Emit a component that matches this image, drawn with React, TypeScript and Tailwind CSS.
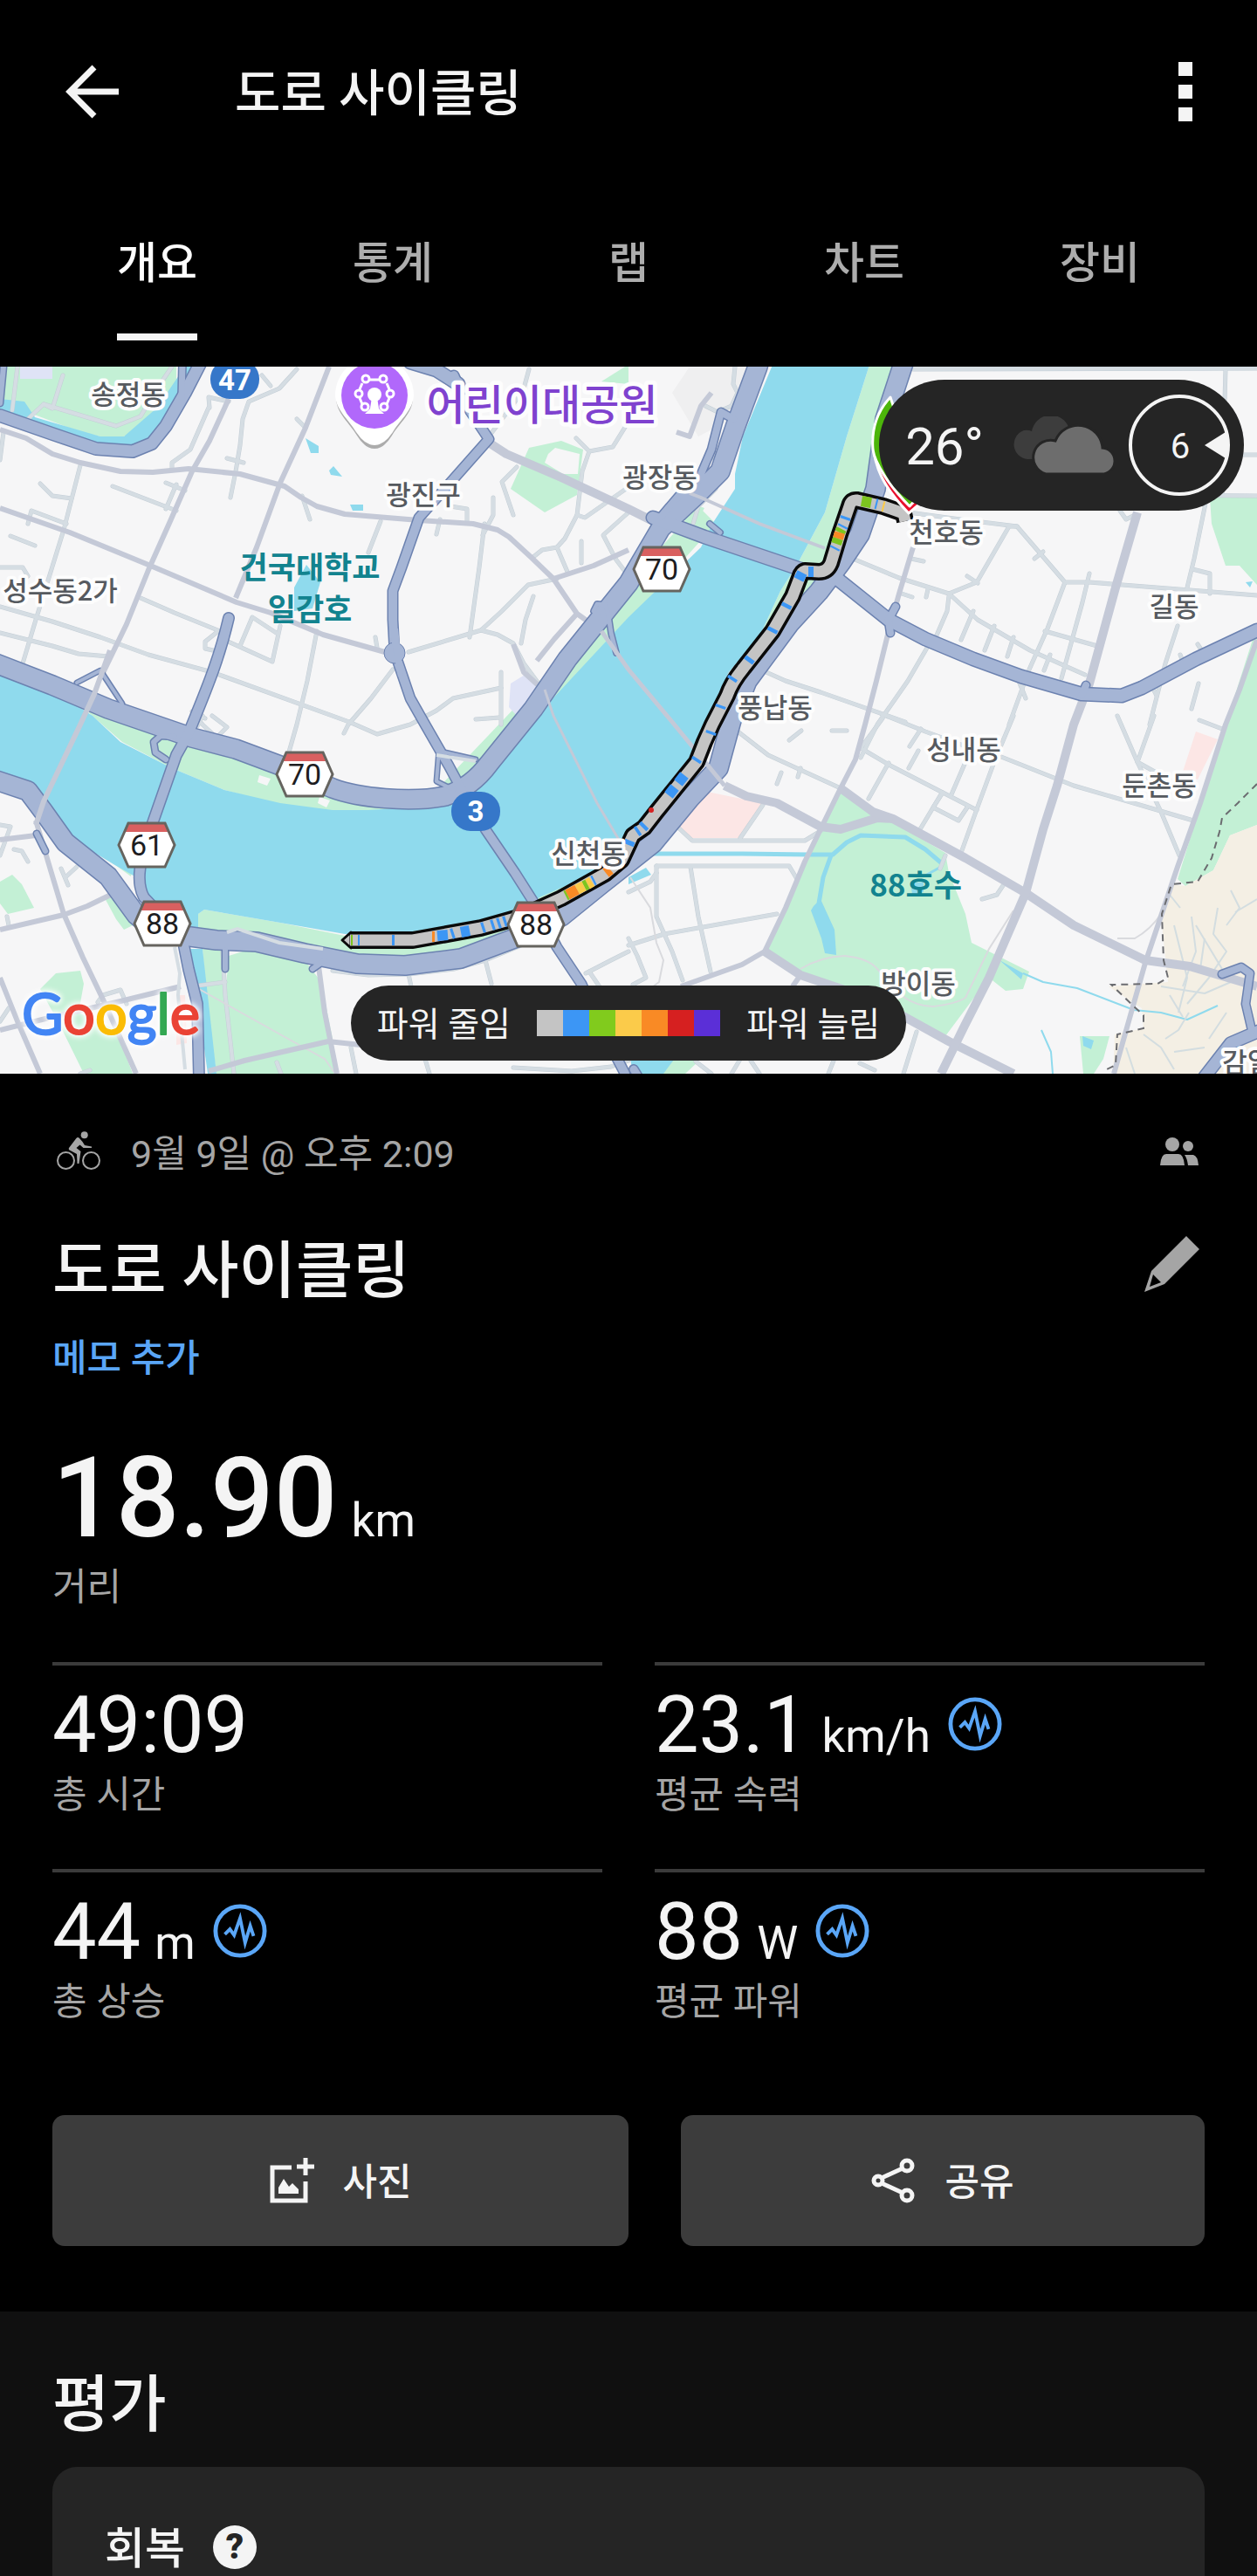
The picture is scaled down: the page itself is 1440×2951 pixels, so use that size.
import React from "react";

const minorRoads = [
  "92,533 73,607 41,710 23,770",
  "0,695 60,712 115,730 170,750 243,770 400,827 432,841 470,830 500,814 519,800 574,788",
  "0,725 60,740 90,749 124,752",
  "161,685 200,702 252,723",
  "129,557 202,585",
  "190,553 212,562",
  "202,555 190,583",
  "46,554 60,568 82,571",
  "12,614 40,625",
  "32,600 36,585 76,600",
  "0,650 26,650 32,660",
  "239,467 218,515 197,530 197,537",
  "262,460 239,455 240,467",
  "340,423 320,445 285,460 278,480 275,510 270,540 264,570",
  "260,525 279,530",
  "300,430 310,442",
  "340,480 350,490",
  "346,568 355,595",
  "363,723 352,780 340,830 330,865",
  "555,600 549,650 538,730",
  "468,747 551,722 570,727 588,737 600,760 620,787",
  "551,722 575,700 605,670 638,663",
  "597,737 602,710 611,683",
  "450,767 425,800 399,830 394,840",
  "574,770 574,830",
  "545,824 572,822",
  "257,733 312,758 321,717",
  "275,740 289,707 318,726",
  "250,723 235,735 235,743 244,745",
  "436,597 422,633",
  "430,730 432,742",
  "565,570 565,590 553,613",
  "500,612 504,595",
  "516,580 535,583 535,597",
  "720,483 702,512 675,517 667,540 661,590 647,617 638,627 621,630 611,638",
  "638,627 650,655",
  "666,620 666,645",
  "661,590 670,593 720,558",
  "720,587 691,613 705,640 720,660",
  "588,590 575,552 592,535",
  "660,502 675,517",
  "606,423 600,445 588,463 560,500",
  "32,480 50,463 133,488 161,477 180,445 197,420",
  "50,463 60,468 72,430",
  "14,470 20,420",
  "0,527 4,495",
  "977,640 1030,662 1087,680 1120,710 1180,745 1243,773",
  "1087,680 1119,667 1156,603 1165,603 1220,667 1248,667 1440,682",
  "1041,587 1100,595 1165,603",
  "1220,667 1200,720 1179,767 1156,830",
  "1248,657 1240,690 1216,777",
  "1349,717 1335,760 1317,830",
  "1383,567 1368,640 1360,673",
  "1366,652 1386,657 1386,680",
  "1283,585 1290,595 1300,590",
  "1195,632 1185,640",
  "1108,660 1120,668",
  "1044,640 1058,643",
  "1033,680 1045,684",
  "1063,675 1061,684",
  "871,767 900,780 940,793 1037,827",
  "1069,730 1040,780 1005,830 986,868",
  "1087,683 1085,700 1072,730",
  "1115,700 1101,733",
  "1139,717 1128,745",
  "1161,730 1154,752",
  "1197,723 1257,740",
  "1203,750 1196,768",
  "1165,775 1175,800",
  "1320,787 1325,797",
  "1352,750 1358,765",
  "1372,738 1380,750",
  "1373,783 1365,812",
  "1374,825 1400,835",
  "1046,423 1440,422",
  "1303,567 1440,568",
  "1400,521 1440,521",
  "1404,423 1400,567",
  "844,837 880,865 963,903",
  "986,857 1020,877 1119,928",
  "1011,823 986,857",
  "1010,818 1060,838 1120,860 1147,867 1230,900 1367,940",
  "1055,835 1042,855",
  "904,848 918,837",
  "953,837 970,837",
  "1161,820 1140,870 1119,927 1101,977",
  "1080,908 1069,925 1098,940 1108,925",
  "1106,873 1090,910",
  "1052,860 1041,880",
  "1018,874 995,915",
  "1078,910 1054,950",
  "1280,820 1303,873 1330,930 1351,980",
  "1322,820 1303,873 1330,888",
  "752,992 904,992 913,1007",
  "791,993 800,1050 814,1113",
  "720,1083 761,1070 890,1047",
  "752,992 752,1050 770,1090 782,1123",
  "720,1022 745,1010 752,1000",
  "720,1075 730,1095 740,1120 725,1128",
  "777,948 793,963 922,963 940,952",
  "874,922 848,960",
  "895,885 890,898",
  "917,880 914,890",
  "1125,1030 1142,1025 1152,1010",
  "1083,980 1077,995",
  "381,1112 422,1117 468,1116 520,1110 556,1100 597,1083",
  "556,1100 563,1127",
  "468,1116 471,1130",
  "675,1113 690,1135",
  "671,1115 700,1100 720,1090",
  "255,1090 258,1140 268,1230",
  "220,1130 258,1125",
  "317,1217 322,1230",
  "402,1200 408,1230",
  "486,1210 492,1230",
  "588,1223 655,1227 700,1222 720,1215",
  "0,980 12,947 0,945",
  "16,973 25,975 32,987",
  "70,995 78,1014",
  "88,993 76,1004",
  "8,1050 10,1060",
  "112,1148 118,1140 138,1134 145,1150",
  "92,1230 103,1226",
  "0,1170 10,1155",
  "223,820 232,830 245,842",
  "232,820 226,832",
  "243,820 260,833 250,843",
  "235,823 220,815",
  "838,1230 850,1210",
  "860,1215 870,1230",
  "949,1230 955,1215",
  "985,1218 1002,1226",
  "1050,1182 1035,1230",
  "797,1216 815,1230",
  "842,420 840,440 845,450 838,465 822,472 808,465",
  "818,520 822,540",
  "818,525 826,535 820,560 800,580 794,600",
];

const greyRoads = [
  "0,492 30,502 60,520 92,530 138,540 175,541 216,537 275,543 326,557 345,570 363,580 395,589 480,596 542,600 570,607 583,615 608,638 634,663 661,703 689,723",
  "0,582 80,610 170,647 271,690 310,702 370,727 441,747",
  "262,457 240,505 220,540 195,597 170,653 145,715 115,777",
  "377,420 350,490 321,553 294,627 270,685",
  "720,630 680,648 634,663",
  "661,703 635,732 615,757",
  "588,738 600,770 622,790",
  "0,962 41,957",
  "41,940 73,1047 95,1097 119,1147 156,1230",
  "0,1065 73,1048 100,1038 133,1022",
  "0,1180 60,1165 138,1147 207,1130",
  "0,1120 20,1170 46,1230",
  "365,1107 372,1160 386,1230",
  "239,1227 280,1215 376,1193 413,1197",
  "1046,627 1030,680 1018,723 1004,780 991,830 980,870 963,903 940,950 922,987 900,1040 876,1090",
  "876,1090 850,1105 780,1130",
  "917,1117 908,1130",
  "1440,733 1420,790 1404,830 1375,920 1349,993 1312,1103 1276,1230",
  "720,583 748,594",
  "775,495 790,500 803,465 815,450",
];

const widePaths = [
  "560,507 580,520 643,547 720,583 748,597",
  "830,900 855,912 890,920 940,947 963,950 1005,937 1023,938 1106,983 1175,1023 1230,1060 1312,1100 1363,1107 1440,1130",
  "963,903 1000,930 1023,938",
  "876,1090 917,1117 1000,1145 1087,1193 1161,1230",
  "1303,587 1278,673 1248,783 1230,830 1211,900 1195,950 1175,1023 1133,1120 1105,1175 1078,1230",
];

const blueRoads = [
  { d: "M262 708C250 760 232 800 216 840L202 865L174 945C160 985 155 1010 165 1028L186 1050", w: 11 },
  { d: "M520 430L538 470L560 503L514 555L480 593L460 650L450 677V710L452 747L470 800L487 830L514 877L528 903L556 950L590 1000L611 1033L638 1085L666 1127L690 1180L716 1230", w: 10 },
  { d: "M470 415L500 424L525 440", w: 14 },
  { d: "M748 593L807 615L917 652L959 663L1018 710L1060 732L1115 755L1170 775L1239 795L1285 797L1308 788L1370 755L1440 722", w: 14 },
  { d: "M840 480L826 472L815 515L800 550L780 565L757 592", w: 8 },
  { d: "M0 476L60 497L110 514L152 517L174 508L190 488L212 450L230 415", w: 13 },
  { d: "M209 415L208 455", w: 7 },
  { d: "M0 462L4 420", w: 6 },
  { d: "M211 1085L216 1110L226 1150L228 1235", w: 11 },
  { d: "M1445 1180L1410 1195L1375 1240", w: 13 },
  { d: "M1400 1116L1422 1108L1432 1115L1427 1150L1434 1180", w: 8 },
  { d: "M726 1225L735 1240", w: 9 },
  { d: "M690 712L680 700L684 692L694 693L697 705L700 725L706 748", w: 5 },
  { d: "M190 870L178 862L176 850L184 843L200 844", w: 6 },
  { d: "M503 858L500 895L520 905M510 862L545 870", w: 4 },
  { d: "M258 1088V1110M372 1100L358 1110", w: 6 },
  { d: "M88 782L115 768L140 806", w: 4 },
  { d: "M1018 710L1026 695M1240 795L1244 785M1018 712L1020 725", w: 8 },
  { d: "M42 955L52 975", w: 6 },
  { d: "M813 600L825 610", w: 5 },
];

const highways = [
  "M-10 758L60 785L124 812L220 845L270 858L321 877L381 903C410 914 470 920 510 912Q540 902 560 875L611 812L650 755L720 668L757 605L800 565L825 540L842 490L868 420L872 405",
  "M-10 892L32 906L50 930L75 965L124 1004L156 1048L180 1068L248 1077L294 1079L349 1092L409 1104L464 1106L528 1098L592 1074L643 1050L690 1012L748 966L790 915L823 880L838 825L856 780L904 715L938 678L963 645L985 612L1003 560L1014 480L1037 410",
];

const beigeRoads = [
  "1365,1050 1370,1090 1355,1130",
  "1370,1060 1385,1085 1400,1110",
  "1345,1060 1360,1120 1350,1160",
  "1395,1040 1390,1070 1405,1090 1385,1120 1360,1150",
  "1340,1025 1352,1040",
  "1410,1020 1420,1040 1405,1060",
  "1415,1045 1440,1030",
  "1330,1130 1380,1138 1410,1125",
  "1380,1075 1375,1110",
  "1310,1185 1330,1200 1345,1225",
  "1335,1190 1350,1180 1362,1160",
  "1345,1205 1380,1200",
  "1290,1200 1300,1230",
  "1355,1165 1340,1140",
  "1405,1160 1385,1190",
];

const routePath =
  "M1037 597L1035 588L1012 580L982 573Q975 572 973 580L962 612L952 645Q948 655 938 655L922 654Q918 655 916 662L908 683L885 723L852 765Q838 782 833 797L816 830L807 850L798 873L752 930L738 948L725 957L712 985L693 1001L643 1029L597 1050L551 1063L473 1077L401 1077";

const routeMarks: [string, string][] = [
  ["M987 574L998 576", "#7dc51f"],
  ["M1003 577L1005 577.5", "#3c96f5"],
  ["M1011 580L1013 580.5", "#fbcb4a"],
  ["M969 592L968 595", "#3c96f5"],
  ["M966 602L965 604", "#3c96f5"],
  ["M964 606L962 610", "#7dc51f"],
  ["M962 610L960 617", "#f98a25"],
  ["M960 617L958 623", "#7dc51f"],
  ["M957 627L956 629", "#3c96f5"],
  ["M932 655L926 655", "#3c96f5"],
  ["M919 656L915 664", "#3c96f5"],
  ["M902 692L900 696", "#3c96f5"],
  ["M886 720L884 724", "#3c96f5"],
  ["M860 754L857 758", "#3c96f5"],
  ["M840 776L838 779", "#3c96f5"],
  ["M826 808L825 811", "#3c96f5"],
  ["M815 838L814 841", "#3c96f5"],
  ["M799 869L797 872", "#3c96f5"],
  ["M784 888L777 897", "#3c96f5"],
  ["M773 902L766 911", "#3c96f5"],
  ["M739 945L736 948", "#3c96f5"],
  ["M732 951L729 953", "#3c96f5"],
  ["M722 963L720 968", "#3c96f5"],
  ["M699 996L694 1000", "#f98a25"],
  ["M681 1008L679 1009", "#3c96f5"],
  ["M678 1010L673 1013", "#fbcb4a"],
  ["M673 1013L669 1015", "#7dc51f"],
  ["M669 1015L661 1019", "#fbcb4a"],
  ["M661 1019L650 1025", "#f98a25"],
  ["M650 1025L648 1026", "#7dc51f"],
  ["M580 1055L577 1056", "#3c96f5"],
  ["M573 1057L570 1058", "#3c96f5"],
  ["M566 1059L563 1060", "#3c96f5"],
  ["M555 1062L552 1063", "#3c96f5"],
  ["M538 1066L528 1068", "#3c96f5"],
  ["M520 1069L517 1070", "#3c96f5"],
  ["M513 1071L501 1072", "#3c96f5"],
  ["M498 1073L495 1073", "#f98a25"],
  ["M452 1077L449 1077", "#3c96f5"],
  ["M412 1077L410 1077", "#3c96f5"],
  ["M404 1077L402 1077", "#7dc51f"],
];

const places: [string, number, number][] = [
  ["송정동", 147, 463],
  ["광진구", 485, 578],
  ["성수동2가", 69, 688],
  ["광장동", 756, 558],
  ["천호동", 1084, 621],
  ["길동", 1345, 706],
  ["풍납동", 888, 822],
  ["성내동", 1104, 870],
  ["둔촌동", 1328, 911],
  ["방이동", 1052, 1138],
  ["감일동", 1443, 1228],
  ["신천동", 674, 989],
];

const routeShields: [string, number, number][] = [
  ["70", 349, 887],
  ["61", 168, 968],
  ["88", 186, 1058],
  ["88", 614, 1059],
  ["70", 758, 652],
];

function RideMap() {
  return (
    <svg viewBox="0 420 1440 810" className="block h-auto w-full" role="img" aria-label="주행 경로 지도">
      <rect y="420" width="1440" height="810" fill="#f6f6f7" />

      <g fill="#c3f0d5">
        <path d="M0 420H202V440L170 487L133 504L92 495L0 460Z" />
        <path d="M606 513L643 505L668 515L661 567L624 587L585 560Z" />
        <path d="M689 437L716 420H720V440Z" />
        <path d="M766 587L780 572L807 582L796 602Z" />
        <path d="M996 418H1037L1010 540L985 612L940 680L904 715L838 825L800 870L871 727L894 677L913 647L945 587L970 500Z" />
        <path d="M1386 570H1440V670L1420 648H1404L1388 600Z" />
        <path d="M1440 717L1404 830L1349 1007L1358 1015L1390 997L1409 957L1440 945Z" />
        <path d="M963 908L1005 933L1023 942L1083 977L1087 1000L1106 1047L1113 1080L1179 1113L1172 1133L1152 1135L1133 1120L1083 1187L1037 1167L922 1115L876 1092L945 943Z" />
        <path d="M100 815L140 850L197 880L257 905L321 922L381 930L422 930L505 923L550 895L615 822L724 707L820 600L800 580L600 800L500 905H400L320 870L210 835Z" />
        <path d="M227 1047L234 1042L321 1057L395 1072L519 1062L600 1035L680 990L720 960L740 968L640 1060L520 1110H400L294 1085H227Z" />
        <path d="M232 1087H255L262 1195L270 1230H248L237 1150Z" />
        <path d="M262 1095L294 1085L349 1100L368 1125L381 1190L385 1230H268L258 1140Z" />
        <path d="M14 1002L25 1013L39 1040L9 1047L0 1035V1010Z" />
        <path d="M64 1115L92 1112L96 1127L90 1160L133 1180L152 1230H96L69 1175L46 1133Z" />
        <path d="M119 1027L138 1023L152 1060L142 1065L133 1053Z" />
        <path d="M1237 1187L1271 1187L1264 1213L1253 1230H1241Z" />
        <path d="M100 950L152 995L150 1004L110 975Z" />
        <path d="M755 1230L775 1210L800 1216L785 1230Z" />
      </g>
      <path d="M628 520L636 513L664 520L662 543L645 543L624 530Z" fill="#f6f6f7" />
      <path d="M1409 957L1440 945V1230H1275L1277 1185L1310 1178L1308 1155L1270 1130L1338 1125L1330 1050L1342 1013L1358 1015L1390 997Z" fill="#f4efe4" />
      <g fill="#fce6e5">
        <path d="M810 907L874 920L846 960H793L777 948Z" />
        <path d="M1370 838L1395 847L1372 893L1354 887Z" />
        <path d="M203 1140H212L214 1195L202 1197Z" />
      </g>
      <path d="M606 770L620 790L592 820L583 810L585 783ZM23 420H60V434H23Z" fill="#dfe3f6" />
      <path d="M790 420H858V470L800 500L770 450Z" fill="#efeff0" />

      <g fill="#8fdaed">
        <path d="M0 770L60 790L106 820L138 850L197 880L257 905L321 920L381 928H422L505 923L542 902L615 820L720 707L803 627L816 600L842 560V543L851 500L885 418H996L970 500L945 587L913 647L894 677L871 727L835 770L807 830L796 860L766 897L738 937L720 957L689 997L620 1027L583 1047L519 1060L459 1069L395 1070L321 1057L234 1042L227 1047V1075L184 1062L165 1010L130 990L92 967L60 950L50 917L0 887Z" />
        <path d="M0 457L28 460L40 478L115 500H142L180 467L205 430V420H236L188 497L152 520H133L0 475Z" />
        <path d="M351 647L367 667L358 697L337 700V673Z" />
        <path d="M350 502L365 511V519H356ZM377 539L382 534L392 546L379 544ZM401 578H416V585H404Z" />
        <path d="M218 1087H232L248 1230H238Z" />
        <path d="M720 1005L740 994L746 1002L720 1013Z" />
        <path d="M720 1200L740 1215L775 1210L760 1230H725Z" />
        <path d="M1240 1187L1253 1192L1250 1202L1241 1198ZM1145 1100L1172 1115L1170 1122Z" />
        <path d="M1043 1012L1058 1010V1022L1045 1024Z" />
        <path d="M932 1038L940 1030L956 1065L958 1094L945 1092L941 1075L929 1043Z" />
        <path d="M1427 667L1435 666L1432 673Z" />
      </g>
      <path d="M297 888L310 892L306 900L295 896ZM366 913L378 917L374 925L364 920Z" fill="#f6f6f7" />
      <g fill="none" stroke="#8fdaed" strokeLinejoin="round">
        <path d="M748 978L850 978L927 979L954 979L970 965L986 957L1037 959L1060 973L1080 990M952 980L943 1005L938 1035" strokeWidth="5" />
        <path d="M1060 1003L1078 993" strokeWidth="3" />
        <path d="M1172 1115L1195 1125L1234 1132L1299 1157L1330 1160L1360 1168L1395 1152M1193 1180L1204 1205L1206 1230" strokeWidth="2" />
      </g>

      <g fill="none" stroke="#c4ced6" strokeWidth="5" strokeLinejoin="round" strokeLinecap="round">
        {minorRoads.map((points) => (
          <polyline key={points} points={points} />
        ))}
      </g>
      <g fill="none" stroke="#d5dde3" strokeWidth="4" strokeLinejoin="round" strokeLinecap="round">
        {minorRoads.map((points) => (
          <polyline key={points} points={points} />
        ))}
      </g>
      <g fill="none" stroke="#d3dde0" strokeWidth="2" strokeLinejoin="round">
        {beigeRoads.map((points) => (
          <polyline key={points} points={points} />
        ))}
      </g>
      <g fill="none" stroke="#d9dade" strokeWidth="2">
        <path d="M917 1110Q940 1096 968 1095Q995 1098 1005 1110L1032 1140Q1050 1153 1069 1153Q1095 1150 1106 1143L1133 1087L1161 1043M1280 1075H1300Q1318 1065 1330 1047M228 1133L330 1190L372 1213L384 1230M722 1005L745 1040L752 1080L760 1100L755 1125L735 1140" />
      </g>
      <g fill="none" stroke="#c4c9d7" strokeWidth="6" strokeLinejoin="round">
        {greyRoads.map((points) => (
          <polyline key={points} points={points} />
        ))}
      </g>
      <g fill="none" stroke="#c4c9d7" strokeWidth="10" strokeLinejoin="round">
        {widePaths.map((points) => (
          <polyline key={points} points={points} />
        ))}
      </g>
      <g fill="none" stroke="#6c82b0" strokeLinejoin="round" strokeLinecap="round">
        {blueRoads.map((road) => (
          <path key={road.d} d={road.d} strokeWidth={road.w + 3} />
        ))}
        {highways.map((d) => (
          <path key={d} d={d} strokeWidth="24" />
        ))}
      </g>
      <g fill="none" stroke="#a5b5d5" strokeLinejoin="round" strokeLinecap="round">
        {highways.map((d) => (
          <path key={d} d={d} strokeWidth="21" />
        ))}
        {blueRoads.map((road) => (
          <path key={road.d} d={road.d} strokeWidth={road.w} />
        ))}
      </g>
      <circle cx="452" cy="748" r="12" fill="#a5b5d5" stroke="#6c82b0" strokeWidth="1" />
      <path d="M446 720L456 720L462 775L456 775Z" fill="#a5b5d5" />
      <g fill="none" stroke="#c4c9d7" strokeWidth="5">
        <path d="M126 745L108 795L92 830L50 918L41 945" strokeWidth="6" />
        <path d="M689 723L720 767L770 827L830 900" />
        <path d="M624 790L634 820L684 920L712 967" strokeWidth="3" />
        <path d="M790 565L803 570L870 600L945 628" strokeWidth="4" />
      </g>
      <g fill="none" stroke="#d5dde3" strokeWidth="4">
        <path d="M260 1068L272 1064L320 1080L370 1087M200 1085L206 1115L204 1140L212 1225M500 865L545 872" />
      </g>
      <polyline
        points="1440,898 1418,920 1400,937 1397,953 1388,983 1372,1010 1342,1013 1331,1047 1333,1100 1338,1120 1326,1127 1273,1128 1299,1153 1310,1163 1310,1178 1280,1185 1278,1220 1264,1227"
        fill="none"
        stroke="#6b6c70"
        strokeWidth="2"
        strokeDasharray="8 6"
      />

      <g fill="none" strokeLinejoin="round">
        <path d={routePath} stroke="#0a0a0a" strokeWidth="20" />
        <path d="M402 1068L392 1077L402 1086Z" fill="#c4c4c4" stroke="#0a0a0a" strokeWidth="3" />
        <path d={routePath} stroke="#c4c4c4" strokeWidth="13" />
        {routeMarks.map(([d, color]) => (
          <path key={d} d={d} stroke={color} strokeWidth="12" />
        ))}
      </g>
      <circle cx="746" cy="928" r="3" fill="#d62222" />

      <g strokeLinejoin="round">
        <path d="M1041 588C1012 558 1001 535 1000 505L1030 490L1062 570Z" fill="#e8112d" stroke="#ffffff" strokeWidth="3" />
        <path d="M1042 580C1018 556 1002 530 1000 515C998 490 1006 470 1020 455L1056 565Z" fill="#4cb60a" stroke="#ffffff" strokeWidth="3" />
      </g>

      <g
        className="font-['Noto_Sans_CJK_KR',sans-serif]"
        stroke="#fdfdfd"
        strokeLinejoin="round"
        paintOrder="stroke"
        textAnchor="middle"
      >
        <g fontSize="31" fontWeight="500" fill="#565a5f" strokeWidth="8">
          {places.map(([name, x, y]) => (
            <text key={name} x={x} y={y}>
              {name}
            </text>
          ))}
        </g>
        <text x="621" y="481" fontSize="48" fontWeight="500" fill="#7f42cf" strokeWidth="10">
          어린이대공원
        </text>
        <g fontSize="35" fontWeight="700" fill="#12838f" stroke="none">
          <text x="355" y="663">
            건국대학교
          </text>
          <text x="355" y="711">
            일감호
          </text>
          <text x="1049" y="1027">
            88호수
          </text>
        </g>
      </g>

      {routeShields.map(([label, x, y]) => (
        <g key={`${label}-${x}`}>
          <path d={`M${x - 32} ${y}L${x - 21} ${y - 25}H${x + 21}L${x + 32} ${y}L${x + 21} ${y + 25}H${x - 21}Z`} fill="#ffffff" />
          <path d={`M${x - 26} ${y - 15}L${x - 21} ${y - 25}H${x + 21}L${x + 26} ${y - 15}Z`} fill="#d96060" />
          <path
            d={`M${x - 32} ${y}L${x - 21} ${y - 25}H${x + 21}L${x + 32} ${y}L${x + 21} ${y + 25}H${x - 21}Z`}
            fill="none"
            stroke="#66645f"
            strokeWidth="3"
          />
          <text x={x} y={y + 12} fontSize="34" textAnchor="middle" fill="#1d1d1f" className="font-[Roboto,sans-serif]">
            {label}
          </text>
        </g>
      ))}
      <g className="font-[Roboto,sans-serif]" fontSize="33" fontWeight="700" textAnchor="middle" fill="#ffffff">
        <rect x="241" y="412" width="56" height="45" rx="22" fill="#3677c9" />
        <text x="269" y="447">
          47
        </text>
        <rect x="517" y="907" width="56" height="45" rx="22" fill="#3677c9" />
        <text x="545" y="941">
          3
        </text>
      </g>

      <g>
        <path d="M385 457A44 44 0 1 1 473 457C472 474 458 484 449 499Q440 514 429 514Q418 514 409 499C400 484 386 474 385 457Z" fill="#000000" opacity="0.3" />
        <path d="M384 453A45 45 0 1 1 474 453C473 470 459 480 450 495Q440 510 429 510Q418 510 408 495C399 480 385 470 384 453Z" fill="#ffffff" />
        <circle cx="429" cy="453" r="38" fill="#b168fb" />
        <g fill="none" stroke="#ffffff" strokeWidth="3">
          <path d="M423 435H435M415 439L412 446M443 439L446 446M412 456L415 463M446 456L443 463" />
          <circle cx="419" cy="434" r="4" />
          <circle cx="439" cy="434" r="4" />
          <circle cx="411" cy="451" r="4" />
          <circle cx="447" cy="451" r="4" />
          <circle cx="418" cy="466" r="4" />
          <circle cx="440" cy="466" r="4" />
        </g>
        <circle cx="429" cy="452" r="8" fill="#ffffff" />
        <path d="M426 455H432L434 468L440 474H418L424 468Z" fill="#ffffff" />
      </g>

      <text
        x="25"
        y="1185"
        fontSize="65"
        strokeWidth="2"
        strokeLinejoin="round"
        className="font-[Lato,sans-serif] [filter:drop-shadow(0_0_3px_white)_drop-shadow(0_0_3px_white)]"
      >
        <tspan fill="#4285f4" stroke="#4285f4">G</tspan>
        <tspan fill="#ea4335" stroke="#ea4335">o</tspan>
        <tspan fill="#fbbc05" stroke="#fbbc05">o</tspan>
        <tspan fill="#4285f4" stroke="#4285f4">g</tspan>
        <tspan fill="#34a853" stroke="#34a853">l</tspan>
        <tspan fill="#ea4335" stroke="#ea4335">e</tspan>
      </text>
    </svg>
  );
}

function WeatherBadge() {
  return (
    <div className="absolute top-[15px] right-[15px] flex h-[150px] items-center rounded-full bg-[#252525] pr-4 pl-[30px]">
      <span className="pt-1 font-[Roboto,sans-serif] text-[60px] leading-none text-[#f4f4f4]">26°</span>
      <svg viewBox="0 0 118 66" className="ml-8 w-[118px]" aria-label="흐림" role="img">
        <path d="M18 49A17 17 0 0 1 14 16Q19 15 23 17A22 22 0 0 1 65 12L48 48Z" fill="#3d3d3d" />
        <path d="M39 66A19 19 0 1 1 50 28A28 28 0 0 1 104 36A15 15 0 0 1 102 66Z" fill="#6d6d6d" stroke="#252525" strokeWidth="3" />
      </svg>
      <svg viewBox="0 0 116 116" className="ml-4 w-[116px]" role="img" aria-label="풍속 6">
        <circle cx="58" cy="58" r="56" fill="none" stroke="#f4f4f4" strokeWidth="4" />
        <path d="M87 58L111 43Q115 58 111 73Z" fill="#f4f4f4" />
        <text x="59" y="73" fontSize="40" textAnchor="middle" fill="#f4f4f4" className="font-[Roboto,sans-serif]">
          6
        </text>
      </svg>
    </div>
  );
}

function PowerLegend() {
  return (
    <div className="absolute inset-x-0 bottom-[15px] flex justify-center">
      <div className="flex h-[86px] items-center gap-[30px] rounded-full bg-[#252525] px-[30px] text-[39px] leading-[60px] whitespace-nowrap text-[#f4f4f4]">
        <span className="pt-1">파워 줄임</span>
        <div className="flex h-[30px] w-[210px]">
          <i className="flex-1 bg-[#c4c4c4]" />
          <i className="flex-1 bg-[#3c96f5]" />
          <i className="flex-1 bg-[#81cb1d]" />
          <i className="flex-1 bg-[#fbcb4a]" />
          <i className="flex-1 bg-[#f98a25]" />
          <i className="flex-1 bg-[#d62020]" />
          <i className="flex-1 bg-[#5b2fd7]" />
        </div>
        <span className="pt-1">파워 늘림</span>
      </div>
    </div>
  );
}

function PulseIcon() {
  return (
    <svg viewBox="0 0 64 64" className="size-[62px]" fill="none" stroke="#5aa6f7">
      <circle cx="32" cy="32" r="29" strokeWidth="5" />
      <path d="M14 36L20 30L25 37L32 17L38 46L44 26L48 38" strokeWidth="4" strokeMiterlimit="10" />
    </svg>
  );
}

type StatProps = { value: string; unit?: string; label: string; chart?: boolean };

function Stat({ value, unit, label, chart }: StatProps) {
  return (
    <div className="border-t-4 border-[#3b3b3b] pt-6">
      <dd className="flex items-baseline text-[#f4f4f4]">
        <span className="text-[90px] leading-[90px]">{value}</span>
        {unit && <span className="ml-4 text-[53px] leading-[54px]">{unit}</span>}
        {chart && (
          <button type="button" aria-label={`${label} 차트`} className="ml-5 self-start pt-3">
            <PulseIcon />
          </button>
        )}
      </dd>
      <dt className="mt-1 text-[43px] leading-[60px] text-[#a5a5a5]">{label}</dt>
    </div>
  );
}

const tabs = ["개요", "통계", "랩", "차트", "장비"];

export default function App() {
  return (
    <div className="flex min-h-screen flex-col bg-black font-[Roboto,'Noto_Sans_CJK_KR',sans-serif] text-[#f4f4f4]">
      <header className="flex h-[210px] items-center pr-[74px] pl-[75px]">
        <button type="button" aria-label="뒤로">
          <svg viewBox="0 0 62 62" className="size-[62px]" fill="none" stroke="#f4f4f4" strokeWidth="7">
            <path d="M61 31H6M33 3L5 31L33 59" />
          </svg>
        </button>
        <h1 className="ml-[132px] flex-1 pt-1.5 text-[57px] leading-[80px] font-medium">도로 사이클링</h1>
        <button type="button" aria-label="더보기" className="flex flex-col gap-[10px]">
          <i className="size-4 bg-[#f4f4f4]" />
          <i className="size-4 bg-[#f4f4f4]" />
          <i className="size-4 bg-[#f4f4f4]" />
        </button>
      </header>

      <nav role="tablist" className="flex h-[210px] px-[45px] pb-[30px]">
        {tabs.map((tab, index) => (
          <div key={tab} className="flex flex-1 justify-center">
            <button
              type="button"
              role="tab"
              aria-selected={index === 0}
              className={
                index === 0
                  ? "border-b-8 border-[#f4f4f4] pt-3 text-[50px] leading-[80px] font-medium text-white"
                  : "border-b-8 border-transparent pt-3 text-[50px] leading-[80px] font-medium text-[#adadad]"
              }
            >
              {tab}
            </button>
          </div>
        ))}
      </nav>

      <section className="relative overflow-hidden">
        <RideMap />
        <WeatherBadge />
        <PowerLegend />
      </section>

      <main className="px-[60px] pt-14 pb-[75px]">
        <div className="flex items-center text-[#a5a5a5]">
          <svg viewBox="0 0 52 48" className="ml-1 w-[52px]" fill="#a5a5a5">
            <g transform="translate(-9 -11)">
              <circle cx="20.500" cy="45.500" r="9.500" fill="none" stroke="#a5a5a5" strokeWidth="2" />
              <circle cx="49.500" cy="45.500" r="9.500" fill="none" stroke="#a5a5a5" strokeWidth="2" />
              <circle cx="41.700" cy="16.300" r="4" />
              <path d="M24 31L32 20.500Q34 18 36 20L39.500 24L42 28L50 29.500V31H40.500L36.500 27.500L32.500 31L37.500 35L35.500 49H33.500L33 38L25.500 34Q23 33 24 31Z" />
            </g>
          </svg>
          <time className="ml-[34px] flex-1 pt-1.5 text-[43px] leading-[60px]">9월 9일 @ 오후 2:09</time>
          <svg viewBox="0 0 44 32" className="mr-[7px] w-11" fill="#a5a5a5" role="img" aria-label="공개 대상">
            <circle cx="14" cy="8" r="8" />
            <circle cx="32" cy="10" r="6" />
            <path d="M0 32Q1 19 7 19H21Q27 19 28 32ZM28 20H38Q43 21 44 32H32Q31 24 28 20Z" />
          </svg>
        </div>

        <div className="mt-16 flex items-start justify-between">
          <h2 className="text-[71px] leading-[80px] font-medium">도로 사이클링</h2>
          <button type="button" aria-label="제목 편집" className="mr-[5px]">
            <svg viewBox="0 0 64 64" className="size-16" fill="#a5a5a5">
              <path d="M48 0L63 15L23 55L0 64L8 40ZM10 44L6 58L19 53Z" fillRule="evenodd" />
            </svg>
          </button>
        </div>
        <a href="#memo" className="mt-[30px] block w-fit text-[43px] leading-[60px] font-medium text-[#5aa6f7]">
          메모 추가
        </a>

        <dl>
          <div className="mt-[66px]">
            <dd className="flex items-baseline">
              <span className="text-[128px] leading-[128px] font-medium">18.90</span>
              <span className="ml-4 text-[53px] leading-[54px]">km</span>
            </dd>
            <dt className="mt-2 text-[43px] leading-[60px] text-[#a5a5a5]">거리</dt>
          </div>
          <div className="mt-14 grid grid-cols-2 gap-x-[60px] gap-y-[55px]">
            <Stat value="49:09" label="총 시간" />
            <Stat value="23.1" unit="km/h" label="평균 속력" chart />
            <Stat value="44" unit="m" label="총 상승" chart />
            <Stat value="88" unit="W" label="평균 파워" chart />
          </div>
        </dl>

        <div className="mt-[100px] grid grid-cols-[11fr_10fr] gap-x-[60px]">
          <button type="button" className="flex h-[150px] items-center justify-center gap-8 rounded-[14px] bg-[#3c3c3c] text-[43px] leading-[60px] font-medium">
            <svg viewBox="0 0 52 52" className="size-[52px]" fill="none" stroke="#f4f4f4" strokeWidth="5">
              <path d="M26 11H4V49H42V27M42 0V20M32 10H52" />
              <path d="M11 41V34L17 24L23 33L27 29L34 36V41Z" fill="#f4f4f4" stroke="none" />
            </svg>
            <span className="pt-1">사진</span>
          </button>
          <button type="button" className="flex h-[150px] items-center justify-center gap-8 rounded-[14px] bg-[#3c3c3c] text-[43px] leading-[60px] font-medium">
            <svg viewBox="0 0 52 52" className="size-[52px]" fill="none" stroke="#f4f4f4" strokeWidth="5">
              <circle cx="8" cy="26" r="5" />
              <circle cx="41" cy="9" r="6" />
              <circle cx="41" cy="43" r="6" />
              <path d="M12 23L36 12M12 29L36 40" />
            </svg>
            <span className="pt-1">공유</span>
          </button>
        </div>
      </main>

      <section className="flex flex-1 flex-col bg-[#101010] px-[60px] pt-[67px]">
        <h2 className="text-[71px] leading-[80px] font-medium">평가</h2>
        <div className="mt-[31px] flex-1 rounded-t-[28px] bg-[#252525] px-[60px] pt-[60px]">
          <div className="flex items-center gap-8">
            <h3 className="pt-1 text-[50px] leading-[60px] font-medium">회복</h3>
            <button
              type="button"
              aria-label="회복 도움말"
              className="flex size-[50px] items-center justify-center rounded-full bg-[#f4f4f4] text-[40px] leading-none font-black text-[#252525]"
            >
              ?
            </button>
          </div>
        </div>
      </section>
    </div>
  );
}
